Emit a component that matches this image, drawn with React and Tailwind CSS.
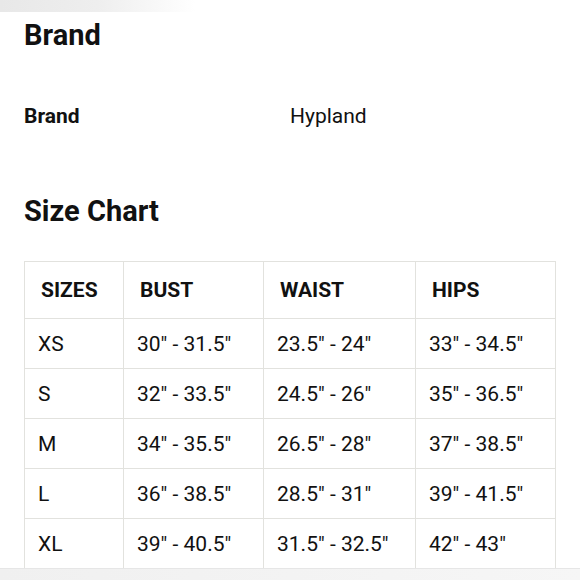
const sizes = [
  { size: 'XS', bust: '30" - 31.5"', waist: '23.5" - 24"', hips: '33" - 34.5"' },
  { size: 'S', bust: '32" - 33.5"', waist: '24.5" - 26"', hips: '35" - 36.5"' },
  { size: 'M', bust: '34" - 35.5"', waist: '26.5" - 28"', hips: '37" - 38.5"' },
  { size: 'L', bust: '36" - 38.5"', waist: '28.5" - 31"', hips: '39" - 41.5"' },
  { size: 'XL', bust: '39" - 40.5"', waist: '31.5" - 32.5"', hips: '42" - 43"' },
];

const headers = ['SIZES', 'BUST', 'WAIST', 'HIPS'];
const widths = ['w-[99px]', 'w-[140px]', 'w-[152px]', 'w-[140px]'];

const App = () => {
  return (
    <div className="relative w-[580px] h-[580px] overflow-hidden bg-white text-[#111] font-['Roboto',sans-serif]">
      {/* top fade strip */}
      <div className="h-[12px] w-[195px] bg-gradient-to-r from-[#e8e8e8] via-[#eeeeee] to-white" />

      <div className="px-6">
        {/* BRAND */}
        <h2 className="mt-[5px] text-[29px] leading-[36px] font-bold">Brand</h2>

        <div className="flex mt-[51px] text-[21px] leading-[24px]">
          <span className="w-[266px] font-bold">Brand</span>
          <span>Hypland</span>
        </div>

        {/* SIZE CHART */}
        <h2 className="mt-[65px] text-[29px] leading-[36px] font-bold">Size Chart</h2>

        <table className="mt-[32px] border-collapse text-[21px] leading-[24px]">
          <thead>
            <tr className="h-[57px]">
              {headers.map((h, i) => (
                <th key={h} className={`border border-[#e2e2de] text-left font-bold pl-4 pr-2 ${widths[i]}`}>
                  {h}
                </th>
              ))}
            </tr>
          </thead>
          <tbody>
            {sizes.map(r => (
              <tr key={r.size} className="h-[50px]">
                <td className="border border-[#e2e2de] pl-[13px] pr-2">{r.size}</td>
                <td className="border border-[#e2e2de] pl-[13px] pr-2">{r.bust}</td>
                <td className="border border-[#e2e2de] pl-[13px] pr-2">{r.waist}</td>
                <td className="border border-[#e2e2de] pl-[13px] pr-2">{r.hips}</td>
              </tr>
            ))}
          </tbody>
        </table>
      </div>

      {/* bottom strip */}
      <div className="absolute left-0 bottom-0 w-full h-[12px] border-t border-[#e6e6e6] bg-gradient-to-r from-[#f0f0f0] to-[#f6f6f6]" />
    </div>
  );
};

export default App;
